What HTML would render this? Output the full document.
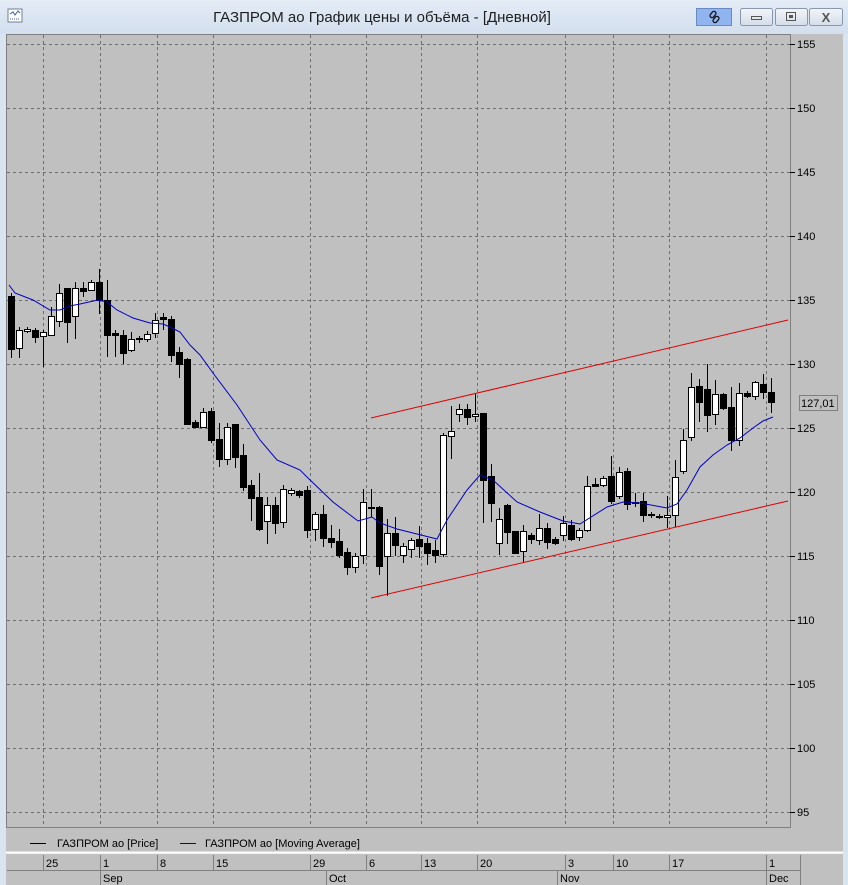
<!DOCTYPE html>
<html><head><meta charset="utf-8"><style>
body{margin:0;width:848px;height:885px;overflow:hidden;background:#d9e4f1;font-family:"Liberation Sans",sans-serif}
svg{display:block}
</style></head><body>
<svg id="s" width="848" height="885" xmlns="http://www.w3.org/2000/svg">
<defs><linearGradient id="tb" x1="0" y1="0" x2="0" y2="1"><stop offset="0" stop-color="#e4ecf6"/><stop offset="1" stop-color="#d3dfee"/></linearGradient>
<linearGradient id="bt" x1="0" y1="0" x2="0" y2="1"><stop offset="0" stop-color="#f2f5f9"/><stop offset="1" stop-color="#d5dde8"/></linearGradient></defs>
<rect x="0" y="0" width="848" height="34" fill="url(#tb)"/>
<rect x="8" y="9" width="14" height="13" fill="#fff" stroke="#6d7f99"/>
<polyline points="10,14 13,12 15,15 18,11 20,13" fill="none" stroke="#3a5f9a"/>
<line x1="10" y1="19" x2="20" y2="19" stroke="#3a5f9a" stroke-dasharray="1,1"/>
<text x="382" y="22" font-size="15" text-anchor="middle" fill="#1e1e1e">ГАЗПРОМ ао График цены и объёма - [Дневной]</text>
<rect x="696.5" y="8.5" width="35" height="17" fill="#8fb4f0" stroke="#6b8bc0"/>
<g fill="none" stroke="#111" stroke-width="1.3">
<rect x="711" y="11" width="4" height="7" rx="2" transform="rotate(40 713 14.5)"/>
<rect x="714" y="16" width="4" height="7" rx="2" transform="rotate(40 716 19.5)"/>
</g>
<rect x="740.5" y="8.5" width="32" height="17" rx="2" fill="url(#bt)" stroke="#8797ad"/>
<rect x="751.5" y="16.5" width="10" height="3" fill="none" stroke="#555"/>
<rect x="775.5" y="8.5" width="32" height="17" rx="2" fill="url(#bt)" stroke="#8797ad"/>
<rect x="786.5" y="12.5" width="9" height="8" fill="none" stroke="#555"/><rect x="789" y="15" width="4" height="3" fill="#555"/>
<rect x="809.5" y="8.5" width="33" height="17" rx="2" fill="url(#bt)" stroke="#8797ad"/>
<text x="826" y="22" font-size="13" text-anchor="middle" fill="#555" font-weight="bold">X</text>
<rect x="6" y="34" width="837" height="818" fill="#c0c0c0"/>
<rect x="6" y="854" width="837" height="31" fill="#c0c0c0"/>
<line x1="6" y1="34.5" x2="790" y2="34.5" stroke="#808080"/>
<line x1="6.5" y1="34" x2="6.5" y2="828" stroke="#808080"/>
<line x1="790.5" y1="34" x2="790.5" y2="828" stroke="#808080"/>
<line x1="6" y1="827.5" x2="790" y2="827.5" stroke="#808080"/>
<line x1="6" y1="852.5" x2="843" y2="852.5" stroke="#fff" stroke-width="2"/>
<g id="g"></g>
<g font-size="12" fill="#000">
<line x1="30" y1="843.5" x2="46" y2="843.5" stroke="#000"/>
<text x="57" y="847" font-size="11">ГАЗПРОМ ао [Price]</text>
<line x1="180" y1="843.5" x2="196" y2="843.5" stroke="#0000c0"/>
<text x="205" y="847" font-size="11">ГАЗПРОМ ао [Moving Average]</text>
</g>
<rect x="799.5" y="395.5" width="38" height="15" fill="none" stroke="#808080"/>
<text x="801" y="407" font-size="11">127,01</text>
</svg>
<script>
var g=document.getElementById('g'),h='';
var vx=[43,100,157,213,310,366,421,477,565,613,669,766];
for(var k=0;k<=12;k++){var y=44+64*k;h+='<line x1="7" y1="'+(y+.5)+'" x2="790" y2="'+(y+.5)+'" stroke="#6e6e6e" stroke-dasharray="3,3"/>';
h+='<line x1="790" y1="'+(y+.5)+'" x2="795" y2="'+(y+.5)+'" stroke="#000"/><text x="797" y="'+(y+4)+'" font-size="11">'+(155-5*k)+'</text>';}
vx.forEach(function(x){h+='<line x1="'+(x+.5)+'" y1="35" x2="'+(x+.5)+'" y2="827" stroke="#6e6e6e" stroke-dasharray="3,3"/>';
h+='<line x1="'+(x+.5)+'" y1="855" x2="'+(x+.5)+'" y2="870" stroke="#808080"/>';});
h+='<line x1="7" y1="870.5" x2="800" y2="870.5" stroke="#808080"/><line x1="800.5" y1="855" x2="800.5" y2="885" stroke="#808080"/>';
var dl=[['25',43],['1',100],['8',157],['15',213],['29',310],['6',366],['13',421],['20',477],['3',565],['10',613],['17',669],['1',766]];
dl.forEach(function(d){h+='<text x="'+(d[1]+3)+'" y="867" font-size="11">'+d[0]+'</text>';});
[['Sep',100],['Oct',326],['Nov',557],['Dec',766]].forEach(function(d){h+='<line x1="'+(d[1]+.5)+'" y1="871" x2="'+(d[1]+.5)+'" y2="885" stroke="#808080"/><text x="'+(d[1]+3)+'" y="882" font-size="11">'+d[0]+'</text>';});
var D=[[296,349,293,358],[348,330,327,358],[331,329,327,333],[330,337,328,343],[336,332,330,367],[335,316,307,335],[321,293,284,327],[288,322,288,343],[316,288,282,339],[288,291,282,297],[290,282,280,291],[282,300,269,314],[300,335,280,357],[333,335,330,357],[335,353,330,364],[350,339,332,352],[339,338,336,343],[339,334,331,342],[333,320,313,338],[317,319,313,330],[319,355,316,362],[352,364,347,378],[359,424,358,425],[422,427,420,428],[427,412,408,427],[411,440,408,443],[439,459,423,467],[459,427,423,465],[424,457,424,468],[455,487,444,491],[485,498,480,521],[497,529,473,531],[521,505,497,544],[505,523,497,534],[522,489,485,528],[493,490,488,496],[491,495,490,498],[490,530,486,538],[529,514,512,541],[514,538,505,547],[538,542,525,548],[541,555,529,558],[552,567,548,575],[567,556,553,573],[555,502,489,564],[507,508,489,517],[507,566,506,575],[556,533,519,596],[533,545,517,556],[555,546,543,563],[549,540,538,558],[539,546,526,558],[543,553,538,565],[550,555,540,563],[554,435,433,557],[436,431,406,459],[414,409,404,422],[409,417,404,425],[416,414,393,422],[413,480,413,523],[476,503,464,522],[543,519,508,555],[505,532,504,544],[531,553,531,553],[551,531,525,563],[535,539,533,544],[540,528,514,545],[528,542,523,549],[539,543,537,545],[535,523,516,541],[525,539,520,541],[537,530,528,541],[530,486,476,532],[484,486,478,487],[485,478,476,487],[476,501,456,504],[496,472,467,499],[471,504,468,510],[502,503,493,507],[501,515,493,522],[514,515,512,518],[516,517,514,519],[517,515,496,528],[515,477,460,527],[471,440,429,474],[437,387,373,441],[386,402,379,422],[389,415,364,432],[414,394,380,425],[394,408,393,410],[407,440,387,451],[440,393,383,446],[393,396,391,398],[396,382,381,400],[384,392,374,399],[392,402,378,413]];
D.forEach(function(c,i){var x=11+8*i,o=c[0],cl=c[1],t=Math.min(o,cl),b=Math.max(o,cl);
h+='<line x1="'+(x+.5)+'" y1="'+c[2]+'" x2="'+(x+.5)+'" y2="'+c[3]+'" stroke="#000"/>';
var w=cl<o?'#fff':'#000';if(b-t<2){h+='<rect x="'+(x-3)+'" y="'+t+'" width="7" height="2" fill="#000"/>';}
else h+='<rect x="'+(x-2.5)+'" y="'+(t+.5)+'" width="6" height="'+(b-t)+'" fill="'+w+'" stroke="#000"/>';});
var ma=[[9,285],[15,293],[33,300],[50,310],[60,310],[70,306],[80,304],[98,300],[107,302],[117,310],[133,318],[150,323],[163,324],[170,327],[180,332],[190,345],[200,355],[213,373],[237,405],[260,440],[277,460],[300,470],[308,478],[333,502],[358,521],[372,517],[380,523],[397,529],[417,534],[437,539],[447,520],[467,490],[480,475],[493,480],[517,502],[540,512],[563,521],[580,524],[607,507],[623,502],[640,503],[667,508],[677,504],[687,490],[700,467],[713,455],[727,445],[740,438],[753,428],[763,421],[773,417]];
h+='<polyline points="'+ma.map(function(p){return p.join(',')}).join(' ')+'" fill="none" stroke="#0000c0" stroke-width="1"/>';
h+='<line x1="371" y1="418" x2="788" y2="320" stroke="#e00000"/><line x1="371" y1="598" x2="788" y2="501" stroke="#e00000"/>';
g.innerHTML=h;
</script>
</body></html>
